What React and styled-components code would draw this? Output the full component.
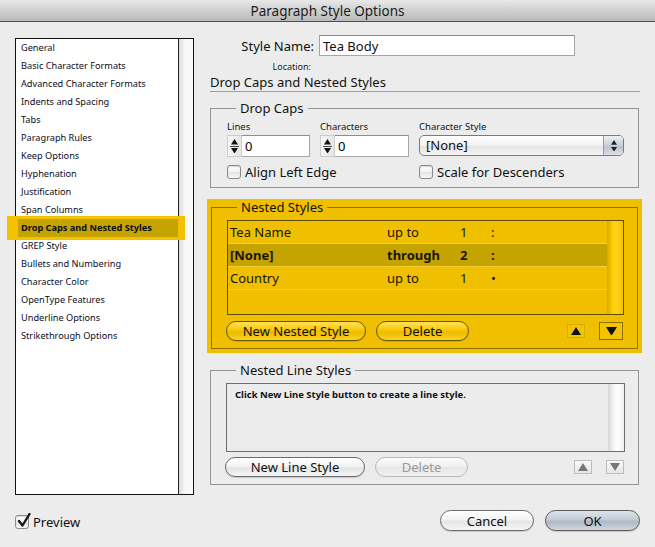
import styled, { createGlobalStyle, css } from "styled-components";

const GlobalStyle = createGlobalStyle`
  html, body {
    margin: 0;
    padding: 0;
    background: #ececec;
  }
  body {
    font-family: "Noto Sans", "DejaVu Sans", sans-serif;
    color: #111;
  }
`;

const categories = [
  "General",
  "Basic Character Formats",
  "Advanced Character Formats",
  "Indents and Spacing",
  "Tabs",
  "Paragraph Rules",
  "Keep Options",
  "Hyphenation",
  "Justification",
  "Span Columns",
  "Drop Caps and Nested Styles",
  "GREP Style",
  "Bullets and Numbering",
  "Character Color",
  "OpenType Features",
  "Underline Options",
  "Strikethrough Options",
];

const nestedStyles = [
  { id: 1, name: "Tea Name", mode: "up to", count: "1", char: ":" },
  { id: 2, name: "[None]", mode: "through", count: "2", char: ":", active: true },
  { id: 3, name: "Country", mode: "up to", count: "1", char: "•" },
];

const UpTriangle = ({ size = 8, color = "#111" }) => (
  <svg width={size} height={size * 0.8} viewBox="0 0 10 8">
    <polygon points="5,0 10,8 0,8" fill={color} />
  </svg>
);

const DownTriangle = ({ size = 8, color = "#111" }) => (
  <svg width={size} height={size * 0.8} viewBox="0 0 10 8">
    <polygon points="0,0 10,0 5,8" fill={color} />
  </svg>
);

const App = () => {
  return (
    <Window>
      <GlobalStyle />
      <TitleBar>Paragraph Style Options</TitleBar>
      <Content>
        <Sidebar>
          <CategoryList>
            <CategoryItems>
              {categories.map((name) => (
                <Category key={name} active={name === "Drop Caps and Nested Styles"}>
                  {name}
                </Category>
              ))}
            </CategoryItems>
            <ScrollTrack />
          </CategoryList>
          <PreviewRow>
            <CheckBox checked>
              <svg width="16" height="16" viewBox="0 0 16 16">
                <path d="M3 8 L6.5 12.5 L13.5 1" stroke="#1a1a1a" strokeWidth="2.4" fill="none" strokeLinecap="round" strokeLinejoin="round" />
              </svg>
            </CheckBox>
            <PreviewLabel>Preview</PreviewLabel>
          </PreviewRow>
        </Sidebar>

        <Main>
          <NameRow>
            <NameLabel>Style Name:</NameLabel>
            <TextInput defaultValue="Tea Body" />
          </NameRow>
          <LocationLabel>Location:</LocationLabel>
          <SectionHeading>Drop Caps and Nested Styles</SectionHeading>

          <Group>
            <Legend>Drop Caps</Legend>
            <DropCapsGrid>
              <Field>
                <SmallLabel>Lines</SmallLabel>
                <SpinBox>
                  <Stepper>
                    <UpTriangle size={7} />
                    <StepDivider />
                    <DownTriangle size={7} />
                  </Stepper>
                  <SpinInput defaultValue="0" />
                </SpinBox>
              </Field>
              <Field>
                <SmallLabel>Characters</SmallLabel>
                <SpinBox>
                  <Stepper>
                    <UpTriangle size={7} />
                    <StepDivider />
                    <DownTriangle size={7} />
                  </Stepper>
                  <SpinInput defaultValue="0" />
                </SpinBox>
              </Field>
              <Field>
                <SmallLabel>Character Style</SmallLabel>
                <Select>
                  <SelectValue>[None]</SelectValue>
                  <SelectArrows>
                    <UpTriangle size={6} color="#222" />
                    <DownTriangle size={6} color="#222" />
                  </SelectArrows>
                </Select>
              </Field>
              <CheckRow span={2}>
                <CheckBox />
                <CheckLabel>Align Left Edge</CheckLabel>
              </CheckRow>
              <CheckRow>
                <CheckBox />
                <CheckLabel>Scale for Descenders</CheckLabel>
              </CheckRow>
            </DropCapsGrid>
          </Group>

          <Highlight>
            <Group tone="yellow" flush>
              <Legend>Nested Styles</Legend>
              <ListBox tone="yellow" height={95}>
                <Rows>
                  {nestedStyles.map((row) => (
                    <StyleRow key={row.id} active={row.active}>
                      <span>{row.name}</span>
                      <span>{row.mode}</span>
                      <span>{row.count}</span>
                      <span>{row.char}</span>
                    </StyleRow>
                  ))}
                </Rows>
                <ListScroll tone="yellow" />
              </ListBox>
              <ButtonRow>
                <PillButton tone="yellow" width={140}>New Nested Style</PillButton>
                <PillButton tone="yellow" width={93}>Delete</PillButton>
                <ArrowGroup>
                  <ArrowButton tone="yellow" small>
                    <UpTriangle size={10} />
                  </ArrowButton>
                  <ArrowButton tone="yellow">
                    <DownTriangle size={11} />
                  </ArrowButton>
                </ArrowGroup>
              </ButtonRow>
            </Group>
          </Highlight>

          <Group spaced>
            <Legend>Nested Line Styles</Legend>
            <ListBox height={69}>
              <Rows>
                <EmptyHint>Click New Line Style button to create a line style.</EmptyHint>
              </Rows>
              <ListScroll />
            </ListBox>
            <ButtonRow tight>
              <PillButton width={140}>New Line Style</PillButton>
              <PillButton disabled width={93}>Delete</PillButton>
              <ArrowGroup>
                <ArrowButton disabled small>
                  <UpTriangle size={10} color="#777" />
                </ArrowButton>
                <ArrowButton disabled small>
                  <DownTriangle size={10} color="#777" />
                </ArrowButton>
              </ArrowGroup>
            </ButtonRow>
          </Group>

          <Footer>
            <PillButton width={94} height={21}>Cancel</PillButton>
            <PillButton tone="primary" width={95} height={21}>OK</PillButton>
          </Footer>
        </Main>
      </Content>
    </Window>
  );
};

export default App;

const Window = styled.div`
  width: 655px;
  height: 547px;
  overflow: hidden;
  display: flex;
  flex-direction: column;
  background: #ececec;
`;

const TitleBar = styled.div`
  height: 21px;
  flex-shrink: 0;
  display: flex;
  align-items: center;
  justify-content: center;
  font-size: 13.5px;
  color: #1c1c1c;
  background: linear-gradient(#e9e9e9, #cfcfcf 50%, #b9b9b9);
  border-bottom: 1px solid #4e4e4e;
`;

const Content = styled.div`
  display: flex;
  gap: 13px;
  padding: 13px 0 0 15px;
`;

const Sidebar = styled.div`
  width: 179px;
  padding-top: 3px;
  display: flex;
  flex-direction: column;
`;

const CategoryList = styled.div`
  height: 457px;
  box-sizing: border-box;
  border: 1px solid #111;
  background: #fff;
  display: flex;
`;

const CategoryItems = styled.ul`
  flex: 1;
  margin: 0;
  padding: 0;
  list-style: none;
`;

const Category = styled.li`
  height: 18px;
  line-height: 18px;
  margin: 0 0 0 2px;
  padding-left: 3px;
  font-size: 9.2px;
  color: #0d0d1a;
  white-space: nowrap;
  ${({ active }) =>
    active &&
    css`
      background: #c6a400;
      font-weight: 700;
      box-shadow: -8px 0 0 3px #f2c100, 4px 0 0 3px #f2c100;
      position: relative;
    `}
`;

const ScrollTrack = styled.div`
  width: 14px;
  border-left: 1px solid #222;
  background: linear-gradient(to right, #dcdcdc, #f6f6f6 40%, #fafafa);
`;

const PreviewRow = styled.label`
  margin-top: 18px;
  display: flex;
  align-items: center;
  gap: 4px;
`;

const PreviewLabel = styled.span`
  font-size: 13px;
`;

const CheckBox = styled.span`
  width: 14px;
  height: 14px;
  box-sizing: border-box;
  border: 1px solid #8a8a8a;
  border-radius: 3px;
  background: linear-gradient(#ffffff, #f1f1f1 50%, #e2e2e2 51%, #f7f7f7);
  box-shadow: inset 0 1px 1px rgba(0, 0, 0, 0.15);
  position: relative;
  flex-shrink: 0;
  svg {
    position: absolute;
    left: 0;
    top: -3px;
  }
`;

const Main = styled.div`
  width: 435px;
  display: flex;
  flex-direction: column;
`;

const NameRow = styled.div`
  display: grid;
  grid-template-columns: 107px 256px;
  column-gap: 5px;
  align-items: center;
  height: 21px;
`;

const NameLabel = styled.span`
  font-size: 13px;
  text-align: right;
`;

const TextInput = styled.input`
  height: 21px;
  box-sizing: border-box;
  border: 1px solid #a5a5a5;
  border-top-color: #8a8a8a;
  background: #fff;
  padding: 0 3px;
  font-family: inherit;
  font-size: 13px;
  color: #111;
  outline: none;
`;

const LocationLabel = styled.div`
  width: 104px;
  margin-top: 5px;
  height: 12px;
  line-height: 12px;
  text-align: right;
  font-size: 9px;
  color: #222;
`;

const SectionHeading = styled.div`
  margin: 2px 2px 0 3px;
  height: 16px;
  line-height: 15px;
  font-size: 13px;
  border-bottom: 1px solid #9d9d9d;
`;

const Group = styled.fieldset`
  margin: ${({ flush, spaced }) => (flush ? "0" : spaced ? "9px 3px 0" : "8px 3px 0")};
  padding: 5px 13px 7px 15px;
  border: 1px solid ${({ tone }) => (tone === "yellow" ? "#8c7000" : "#939393")};
  min-width: 0;
`;

const Legend = styled.legend`
  margin-left: 10px;
  padding: 0 4px;
  height: 16px;
  line-height: 16px;
  font-size: 13px;
`;

const DropCapsGrid = styled.div`
  display: grid;
  grid-template-columns: 83px 89px 205px;
  column-gap: 10px;
  row-gap: 7px;
  margin-left: 1px;
`;

const Field = styled.div`
  display: flex;
  flex-direction: column;
`;

const SmallLabel = styled.span`
  font-size: 9.5px;
  height: 11px;
  line-height: 11px;
  margin-bottom: 3px;
`;

const SpinBox = styled.div`
  display: flex;
  height: 22px;
`;

const Stepper = styled.div`
  width: 15px;
  display: flex;
  flex-direction: column;
  align-items: center;
  justify-content: center;
  gap: 1px;
  background: linear-gradient(to right, #f6f6f6, #e6e6e6);
  border: 1px solid #cdcdcd;
  box-sizing: border-box;
`;

const StepDivider = styled.span`
  width: 9px;
  height: 1px;
  background: #444;
`;

const SpinInput = styled.input`
  flex: 1;
  min-width: 0;
  box-sizing: border-box;
  border: 1px solid #a8a8a8;
  border-top-color: #8d8d8d;
  border-left: none;
  padding: 0 3px;
  font-family: inherit;
  font-size: 13px;
  background: #fff;
  outline: none;
`;

const Select = styled.div`
  height: 21px;
  box-sizing: border-box;
  border: 1px solid #7b7b7b;
  border-radius: 5px;
  display: flex;
  overflow: hidden;
  background: linear-gradient(#ffffff, #f2f2f2 50%, #e3e3e3 51%, #f4f4f4);
`;

const SelectValue = styled.span`
  flex: 1;
  padding-left: 6px;
  font-size: 13px;
  line-height: 19px;
`;

const SelectArrows = styled.span`
  width: 19px;
  border-left: 1px solid #9a9a9a;
  display: flex;
  flex-direction: column;
  align-items: center;
  justify-content: center;
  gap: 2px;
  background: linear-gradient(#eef1f5, #c9ced6 50%, #b8bec8 51%, #dde1e7);
`;

const CheckRow = styled.label`
  grid-column: span ${({ span }) => span || 1};
  display: flex;
  align-items: center;
  gap: 4px;
  height: 16px;
`;

const CheckLabel = styled.span`
  font-size: 13px;
`;

const Highlight = styled.div`
  margin-top: 11px;
  padding: 0 4px 4px;
  background: #f0c000;
`;

const ListBox = styled.div`
  height: ${({ height }) => height}px;
  box-sizing: border-box;
  border: 1px solid ${({ tone }) => (tone === "yellow" ? "#5e4c00" : "#6e6e6e")};
  display: flex;
  background: ${({ tone }) => (tone === "yellow" ? "#f0c000" : "#ececec")};
`;

const Rows = styled.div`
  flex: 1;
  display: flex;
  flex-direction: column;
`;

const StyleRow = styled.div`
  height: 23px;
  box-sizing: border-box;
  border-bottom: 1px solid #f6d23a;
  display: grid;
  grid-template-columns: 157px 73px 31px 1fr;
  align-items: center;
  padding-left: 2px;
  font-size: 13px;
  color: #1a1400;
  ${({ active }) =>
    active &&
    css`
      background: #c6a400;
      font-weight: 700;
    `}
`;

const ListScroll = styled.div`
  width: 16px;
  background: ${({ tone }) =>
    tone === "yellow"
      ? "linear-gradient(to right, #d8aa00, #ffd000 35%, #ffd21e 60%, #f2c400)"
      : "linear-gradient(to right, #d6d6d6, #f8f8f8 40%, #ffffff 60%, #f0f0f0)"};
`;

const EmptyHint = styled.div`
  padding: 4px 0 0 8px;
  font-size: 9.5px;
  font-weight: 700;
  color: #111;
`;

const ButtonRow = styled.div`
  display: flex;
  align-items: center;
  gap: 10px;
  margin-top: ${({ tight }) => (tight ? 5 : 6)}px;
  margin-left: -1px;
  padding-right: 1px;
`;

const PillButton = styled.button`
  width: ${({ width }) => width}px;
  height: ${({ height }) => height || 20}px;
  box-sizing: border-box;
  padding: 0;
  border-radius: 11px;
  font-family: inherit;
  font-size: 13px;
  color: #111;
  border: 1px solid #6a6a6a;
  background: linear-gradient(#ffffff, #f4f4f4 45%, #e4e4e4 55%, #f6f6f6);
  box-shadow: 0 1px 1px rgba(0, 0, 0, 0.15);
  ${({ tone }) =>
    tone === "yellow" &&
    css`
      border-color: #6b5600;
      background: linear-gradient(#ffe15a, #f7c900 45%, #ebbb00 55%, #fbd020);
    `}
  ${({ tone }) =>
    tone === "primary" &&
    css`
      border-color: #5a5a5a;
      background: linear-gradient(#dde3ea, #c3ccd6 45%, #aeb9c5 55%, #d0d7df);
    `}
  ${({ disabled }) =>
    disabled &&
    css`
      color: #9a9a9a;
      border-color: #b9b9b9;
      box-shadow: none;
      background: linear-gradient(#fafafa, #efefef 50%, #e6e6e6 51%, #f1f1f1);
    `}
`;

const ArrowGroup = styled.div`
  margin-left: auto;
  display: flex;
  align-items: center;
  gap: 14px;
`;

const ArrowButton = styled.span`
  width: ${({ small }) => (small ? 18 : 24)}px;
  height: ${({ small }) => (small ? 14 : 18)}px;
  box-sizing: border-box;
  display: flex;
  align-items: center;
  justify-content: center;
  border: 1px solid ${({ tone, small }) =>
    tone === "yellow" ? (small ? "#d6ab00" : "#8a7000") : "#bdbdbd"};
  background: ${({ tone }) => (tone === "yellow" ? "#f3c500" : "#f0f0f0")};
  ${({ disabled }) =>
    disabled &&
    css`
      background: linear-gradient(#f8f8f8, #e6e6e6);
    `}
`;

const Footer = styled.div`
  margin-top: 25px;
  display: flex;
  justify-content: flex-end;
  gap: 11px;
  padding-right: 2px;
`;
